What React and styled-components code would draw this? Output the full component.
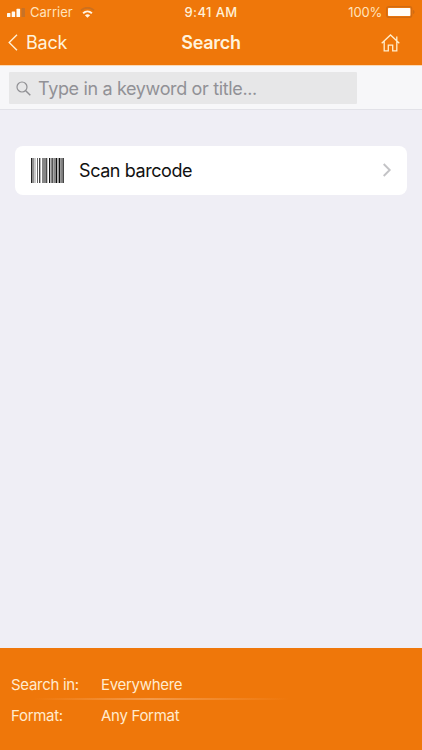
import styled, { createGlobalStyle } from "styled-components"

const GlobalStyle = createGlobalStyle`
  body {
    margin: 0;
    font-family: Inter, "Liberation Sans", sans-serif;
  }
`

const Screen = styled.div`
  display: flex;
  flex-direction: column;
  height: 750px;
  background: #efeef5;
`
const Header = styled.header`
  height: 65px;
  background: #ef770a;
  color: #fff3dc;
`
const StatusBar = styled.div`
  display: grid;
  grid-template-columns: 1fr auto 1fr;
  align-items: center;
  height: 24px;
  padding: 0 7px;
`
const StatusGroup = styled.div`
  display: flex;
  align-items: center;
  justify-content: ${(props) => props.$align || "flex-start"};
`
const StatusText = styled.span`
  font-size: 13px;
  line-height: 24px;
  font-weight: ${(props) => props.$weight || 400};
  letter-spacing: ${(props) => props.$spacing || "0"};
  color: ${(props) => props.$color || "#ffe3bd"};
`
const NavBar = styled.div`
  display: grid;
  grid-template-columns: 1fr auto 1fr;
  align-items: center;
  height: 37px;
  padding: 0 22px 0 8px;
`
const BackButton = styled.div`
  display: flex;
  align-items: center;
  gap: 8px;
  font-size: 18px;
  letter-spacing: -0.25px;
`
const Title = styled.div`
  font-size: 18px;
  font-weight: 600;
  letter-spacing: -0.3px;
  padding-left: 14px;
`
const HomeButton = styled.div`
  display: flex;
  justify-content: flex-end;
`
const SearchBar = styled.div`
  box-sizing: border-box;
  height: 45px;
  padding: 6px 9px;
  background: #f7f7f9;
  border-top: 1px solid #fbd9b5;
  border-bottom: 1px solid #e2e2e8;
`
const SearchField = styled.div`
  display: flex;
  align-items: center;
  gap: 7px;
  box-sizing: border-box;
  width: 348px;
  height: 32px;
  padding-left: 7px;
  border-radius: 1px;
  background: #e7e7e8;
  color: #919196;
`
const Placeholder = styled.span`
  padding-top: 1px;
  font-size: 18px;
  line-height: 32px;
  letter-spacing: -0.35px;
`
const Content = styled.main`
  flex: 1;
  padding: 36px 15px 0;
`
const Card = styled.div`
  display: flex;
  align-items: center;
  box-sizing: border-box;
  height: 49px;
  padding: 0 15px 0 16px;
  border-radius: 8px;
  background: #fff;
`
const CardLabel = styled.span`
  flex: 1;
  margin-left: 15px;
  font-size: 18px;
  letter-spacing: -0.42px;
  color: #111;
`
const Footer = styled.footer`
  box-sizing: border-box;
  height: 102px;
  padding: 23px 11px 0;
  background: #ef770a;
`
const FilterRow = styled.div`
  display: grid;
  grid-template-columns: 90px 1fr;
  height: 28px;
  line-height: 28px;
  font-size: 15px;
  letter-spacing: -0.3px;
  color: #ffebcf;
`
const Divider = styled.div`
  width: 278px;
  height: 2px;
  margin: -1px 0 2px;
  background: linear-gradient(to right, transparent 8%, #f49a4a 50%, transparent);
`

const SignalIcon = () => (
  <svg width="18" height="9" viewBox="0 0 18 9">
    <rect x="0" y="5" width="3.4" height="4" rx="0.6" fill="#fffaf0" />
    <rect x="4.7" y="3.5" width="3.4" height="5.5" rx="0.6" fill="#fffaf0" />
    <rect x="9.5" y="0.8" width="3.6" height="8.2" rx="0.6" fill="#fffaf0" />
    <rect x="14.5" y="0" width="3.5" height="9" rx="0.6" fill="#c77227" />
  </svg>
)

const WifiIcon = () => (
  <svg width="15" height="11" viewBox="0 0 15 11" fill="none">
    <path d="M1 3.3C4.8-.1 10.2-.1 14 3.3" stroke="#cc701e" strokeWidth="1.8" />
    <path d="M3.1 6.2c2.6-2.4 6.2-2.4 8.8 0" stroke="#fff6e6" strokeWidth="1.9" />
    <path d="M7.5 10.8 4.9 8.2c1.5-1.3 3.7-1.3 5.2 0z" fill="#fff6e6" />
  </svg>
)

const BatteryIcon = () => (
  <svg width="29" height="12" viewBox="0 0 29 12">
    <rect x="0.7" y="0.7" width="25" height="10.6" rx="2" fill="none" stroke="#cf6b14" strokeWidth="1.2" />
    <rect x="2" y="2" width="22.4" height="8" rx="0.8" fill="#fffefa" />
    <path d="M27 4v4c2-.6 2-3.4 0-4z" fill="#cf6b14" />
  </svg>
)

const BackIcon = () => (
  <svg width="10" height="17" viewBox="0 0 10 17" fill="none">
    <path d="M9 .8 1.2 8.5 9 16.2" stroke="#fff0d5" strokeWidth="1.4" />
  </svg>
)

const HomeIcon = () => (
  <svg width="19" height="18" viewBox="0 0 19 18" fill="none" stroke="#ffedcc" strokeWidth="1.3">
    <path d="M.7 9.3 9.5 1l8.8 8.3M3.2 7.3v9.6h4.1v-5.7h4.4v5.7h4.1V7.3M15.8 6.8V2.6" />
  </svg>
)

const SearchIcon = () => (
  <svg width="15" height="15" viewBox="0 0 15 15" fill="none" stroke="#909094" strokeWidth="1.2">
    <circle cx="6" cy="6" r="5" />
    <path d="m9.7 9.7 4.6 4.5" strokeWidth="1.5" />
  </svg>
)

const ChevronIcon = () => (
  <svg width="10" height="16" viewBox="0 0 10 16" fill="none">
    <path d="m1.7 1 6 6-6 6" stroke="#c3c3c6" strokeWidth="1.9" />
  </svg>
)

// [x, width, color]
const bars = [
  [0, 1.5, "#222"],
  [2, 1.5, "#8f8f8f"],
  [4, 0.7, "#b4b4b4"],
  [6, 1, "#666"],
  [8, 1.2, "#444"],
  [9.2, 0.8, "#b0b0b0"],
  [11, 4, "#858585"],
  [15, 1.3, "#4a4a4a"],
  [18, 1.3, "#111"],
  [20.5, 1.2, "#111"],
  [22.5, 1.2, "#555"],
  [24.5, 1.8, "#111"],
  [27.6, 1.8, "#111"],
  [29.9, 1, "#777"],
  [31.3, 1.7, "#444"],
]

const BarcodeIcon = () => (
  <svg width="33" height="25" viewBox="0 0 33 25">
    {bars.map(([x, width, fill]) => (
      <rect key={x} x={x} y="0" width={width} height="25" fill={fill} />
    ))}
  </svg>
)

const CarrierText = styled(StatusText)`
  margin: 0 7px 0 5px;
`
const BatteryText = styled(StatusText)`
  margin-right: 4px;
`

const App = () => {
  return (
    <Screen>
      <GlobalStyle />
      <Header>
        <StatusBar>
          <StatusGroup>
            <SignalIcon />
            <CarrierText>Carrier</CarrierText>
            <WifiIcon />
          </StatusGroup>
          <StatusText $weight={500} $spacing="0.4px" $color="#fff0d8">9:41 AM</StatusText>
          <StatusGroup $align="flex-end">
            <BatteryText $spacing="-0.2px">100%</BatteryText>
            <BatteryIcon />
          </StatusGroup>
        </StatusBar>
        <NavBar>
          <BackButton>
            <BackIcon />
            <span>Back</span>
          </BackButton>
          <Title>Search</Title>
          <HomeButton>
            <HomeIcon />
          </HomeButton>
        </NavBar>
      </Header>
      <SearchBar>
        <SearchField>
          <SearchIcon />
          <Placeholder>Type in a keyword or title...</Placeholder>
        </SearchField>
      </SearchBar>
      <Content>
        <Card>
          <BarcodeIcon />
          <CardLabel>Scan barcode</CardLabel>
          <ChevronIcon />
        </Card>
      </Content>
      <Footer>
        <FilterRow>
          <span>Search in:</span>
          <span>Everywhere</span>
        </FilterRow>
        <Divider />
        <FilterRow>
          <span>Format:</span>
          <span>Any Format</span>
        </FilterRow>
      </Footer>
    </Screen>
  )
}

export default App
